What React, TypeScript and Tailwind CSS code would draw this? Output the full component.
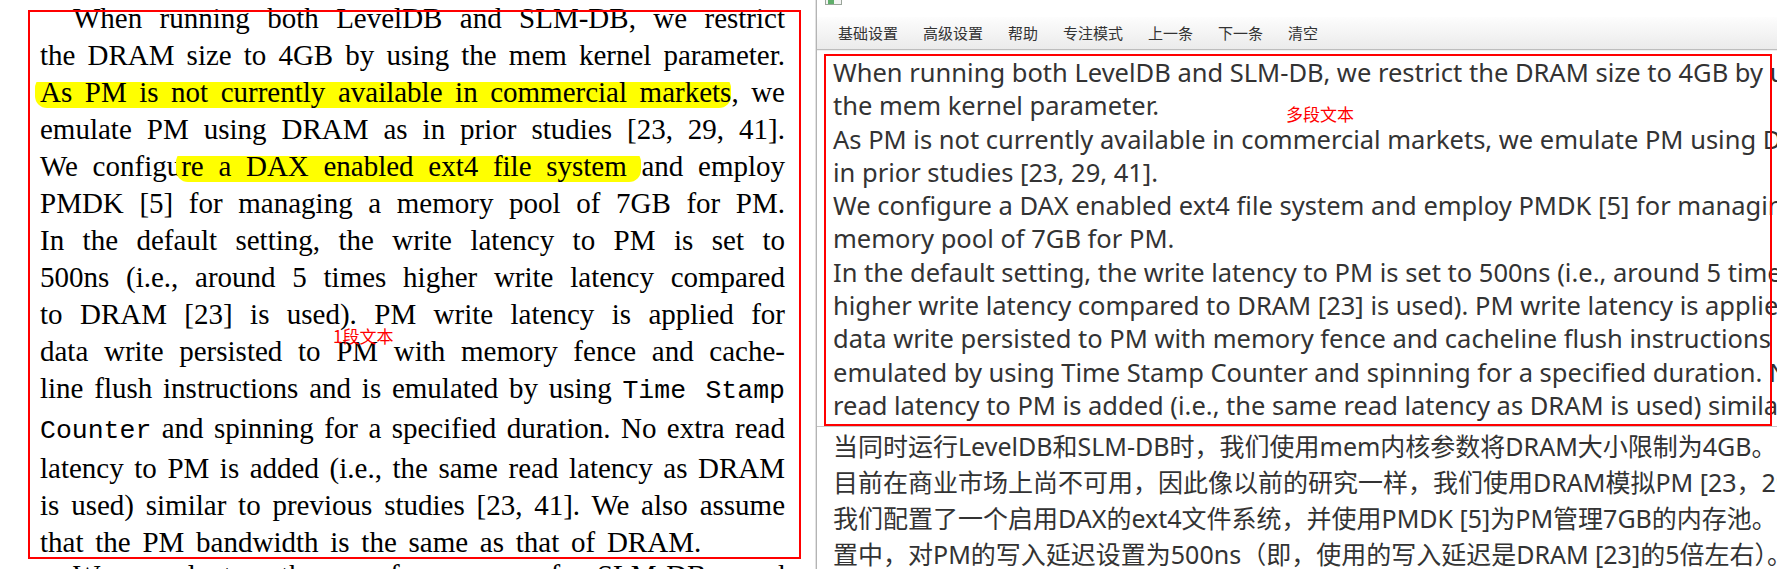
import React from "react";

type Seg = { t: string; hl?: boolean; mono?: boolean };
type Line = { segs: Seg[]; indent?: boolean; last?: boolean; tail?: boolean };

const pdfLines: Line[] = [
  { indent: true, segs: [{ t: "When running both LevelDB and SLM-DB, we restrict" }] },
  { segs: [{ t: "the DRAM size to 4GB by using the mem kernel parameter." }] },
  {
    segs: [
      { t: "As PM is not currently available in commercial markets", hl: true },
      { t: ", we" },
    ],
  },
  { segs: [{ t: "emulate PM using DRAM as in prior studies [23, 29, 41]." }] },
  {
    segs: [
      { t: "We configu" },
      { t: "re a DAX enabled ext4 file system ", hl: true },
      { t: "and employ" },
    ],
  },
  { segs: [{ t: "PMDK [5] for managing a memory pool of 7GB for PM." }] },
  { segs: [{ t: "In the default setting, the write latency to PM is set to" }] },
  { segs: [{ t: "500ns (i.e., around 5 times higher write latency compared" }] },
  { segs: [{ t: "to DRAM [23] is used). PM write latency is applied for" }] },
  { segs: [{ t: "data write persisted to PM with memory fence and cache-" }] },
  {
    segs: [
      { t: "line flush instructions and is emulated by using " },
      { t: "Time Stamp", mono: true },
    ],
  },
  {
    segs: [
      { t: "Counter", mono: true },
      { t: " and spinning for a specified duration. No extra read" },
    ],
  },
  { segs: [{ t: "latency to PM is added (i.e., the same read latency as DRAM" }] },
  { segs: [{ t: "is used) similar to previous studies [23, 41]. We also assume" }] },
  { last: true, segs: [{ t: "that the PM bandwidth is the same as that of DRAM." }] },
  { indent: true, tail: true, segs: [{ t: "We evaluate the performance of SLM-DB and" }] },
];

const editorLines = [
  "When running both LevelDB and SLM-DB, we restrict the DRAM size to 4GB by using",
  "the mem kernel parameter.",
  "As PM is not currently available in commercial markets, we emulate PM using DRAM as",
  "in prior studies [23, 29, 41].",
  "We configure a DAX enabled ext4 file system and employ PMDK [5] for managing a",
  "memory pool of 7GB for PM.",
  "In the default setting, the write latency to PM is set to 500ns (i.e., around 5 times",
  "higher write latency compared to DRAM [23] is used). PM write latency is applied for",
  "data write persisted to PM with memory fence and cacheline flush instructions and is",
  "emulated by using Time Stamp Counter and spinning for a specified duration. No extra",
  "read latency to PM is added (i.e., the same read latency as DRAM is used) similar to",
];

const zhLines = [
  "当同时运行LevelDB和SLM-DB时，我们使用mem内核参数将DRAM大小限制为4GB。由于PM",
  "目前在商业市场上尚不可用，因此像以前的研究一样，我们使用DRAM模拟PM [23，29，41]。",
  "我们配置了一个启用DAX的ext4文件系统，并使用PMDK [5]为PM管理7GB的内存池。在默认设",
  "置中，对PM的写入延迟设置为500ns（即，使用的写入延迟是DRAM [23]的5倍左右）。",
];

const menu = ["基础设置", "高级设置", "帮助", "专注模式", "上一条", "下一条", "清空"];

const PdfPane: React.FC = () => (
  <div className="relative w-[815px] shrink-0 overflow-hidden bg-white">
    <div className="pl-[40px] pr-[30px] font-['Liberation_Serif','Times_New_Roman',serif] text-[29px] leading-[37px] text-black">
      {pdfLines.map((line, i) => (
        <div
          key={i}
          className={
            (line.last
              ? "text-left [word-spacing:4.5px] "
              : "text-justify [text-align-last:justify] ") +
            (line.indent ? "pl-[33px] " : "") +
            (line.tail ? "-mt-[4px]" : "")
          }
        >
          {line.segs.map((s, j) =>
            s.hl ? (
              <span
                key={j}
                className="-ml-[5px] rounded-[12px] bg-[linear-gradient(#ffff00,#ffff00)] bg-[length:100%_26px] bg-bottom bg-no-repeat pl-[5px]"
              >
                {s.t}
              </span>
            ) : s.mono ? (
              <span key={j} className="font-['Liberation_Mono','Courier_New',monospace] text-[26.5px]">
                {s.t}
              </span>
            ) : (
              <span key={j}>{s.t}</span>
            )
          )}
        </div>
      ))}
    </div>
    {/* annotation overlay */}
    <div className="absolute left-[28px] top-[10px] h-[549px] w-[773px] border-2 border-[#ff0000]" />
    <div className="absolute left-[333px] top-[326px] font-['Noto_Sans_CJK_SC',sans-serif] text-[17px] leading-[20px] text-[#ff0000]">
      1段文本
    </div>
  </div>
);

const EditorPane: React.FC = () => (
  <div className="flex min-w-0 flex-1 flex-col border-l border-[#b4b4b4] bg-white font-['Noto_Sans','Noto_Sans_CJK_SC',sans-serif]">
    <div className="h-[17px] shrink-0 bg-white">
      <div className="ml-[8px] flex h-[5px] w-[17px] overflow-hidden border-x border-b border-[#9aa59a] bg-[#f4f4f4]">
        <div className="ml-[2px] h-[4px] w-[6px] bg-[#5fae6a]" />
      </div>
    </div>
    <div className="flex h-[33px] shrink-0 items-center gap-[25px] border-b border-[#bdbdbd] bg-[linear-gradient(#fdfdfd,#ebebeb)] pl-[21px] font-['Noto_Sans_CJK_SC',sans-serif] text-[15px] text-[#333333]">
      {menu.map((m) => (
        <span key={m}>{m}</span>
      ))}
    </div>
    <div className="relative h-[377px] shrink-0 overflow-hidden border-b border-[#c6c6c6] border-t border-t-[#f0f0f0] pl-[16px] pt-[5px] text-[25.5px] leading-[33.3px] text-[#333333]">
      {editorLines.map((l, i) => (
        <div key={i} className="whitespace-nowrap">
          {l}
        </div>
      ))}
      <div className="absolute left-[7px] top-[3px] h-[372px] w-[948px] border-2 border-[#ff0000]" />
      <div className="absolute left-[469px] top-[53px] font-['Noto_Sans_CJK_SC',sans-serif] text-[17px] leading-[20px] text-[#ff0000]">
        多段文本
      </div>
    </div>
    <div className="min-h-0 flex-1 overflow-hidden pl-[16px] pt-[1px] text-[25px] leading-[36px] text-[#333333]">
      {zhLines.map((l, i) => (
        <div key={i} className="whitespace-nowrap">
          {l}
        </div>
      ))}
    </div>
  </div>
);

export default function App() {
  return (
    <div className="flex h-[569px] w-[1777px] overflow-hidden bg-white">
      <PdfPane />
      <div className="w-[1px] shrink-0 bg-[#e2e2e2]" />
      <EditorPane />
    </div>
  );
}
